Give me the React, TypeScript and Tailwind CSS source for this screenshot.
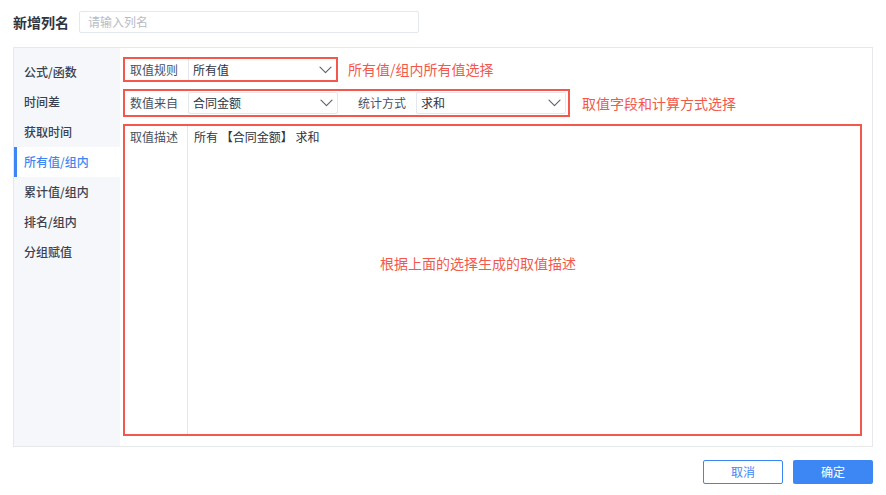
const menuItems = ['公式/函数', '时间差', '获取时间', '所有值/组内', '累计值/组内', '排名/组内', '分组赋值'];

function Chevron() {
  return (
    <svg width="13" height="8" viewBox="0 0 13 8" fill="none" className="mr-[4px]">
      <path d="M1 1.2l5.5 5.5 5.5-5.5" stroke="#5f6673" strokeWidth="1.2" strokeLinecap="round" strokeLinejoin="round" />
    </svg>
  );
}

function Select({ value }: { value: string }) {
  return (
    <div className="w-[150px] h-[22px] flex items-center justify-between border border-[#e4e7ed] rounded-[2px] bg-white pl-[4px]">
      <span className="text-[12px] text-[#2f3541]">{value}</span>
      <Chevron />
    </div>
  );
}

export default function App() {
  return (
    <div className="w-[886px] h-[495px] bg-white font-['Noto_Sans_CJK_SC','Noto_Sans',sans-serif] text-[#2f3541]">
      {/* Header */}
      <div className="flex items-center pl-[13px] pt-[11px]">
        <span className="text-[14px] font-bold text-[#2f3541] w-[66px]">新增列名</span>
        <div className="w-[340px] h-[22px] border border-[#e4e7ed] rounded-[2px] flex items-center pl-[8px]">
          <span className="text-[12px] text-[#b8bcc4]">请输入列名</span>
        </div>
      </div>

      {/* Panel */}
      <div className="ml-[13px] mt-[14px] w-[860px] h-[400px] border border-[#e6e8eb] flex">
        {/* Sidebar */}
        <div className="w-[106px] bg-[#f5f7fa] pt-[9px]">
          {menuItems.map((item) => {
            const active = item === '所有值/组内';
            return (
              <div
                key={item}
                className={
                  active
                    ? 'h-[30px] flex items-center pl-[7px] border-l-[3px] border-[#3d87f5] bg-white text-[12px] font-medium text-[#3d87f5]'
                    : 'h-[30px] flex items-center pl-[10px] text-[12px] font-medium text-[#3a4150]'
                }
              >
                {item}
              </div>
            );
          })}
        </div>

        {/* Content */}
        <div className="flex-1 pl-[3px] pt-[9px] pr-[10px]">
          {/* Rule row */}
          <div className="flex items-center">
            <div className="w-[215px] h-[25px] border-2 border-[#f4574b] flex items-center">
              <span className="w-[63px] pl-[5px] text-[12px] text-[#4a5060]">取值规则</span>
              <div className="flex-1 h-full flex items-center justify-between border-l border-[#e4e7ed] pl-[4px]">
                <span className="text-[12px] text-[#2f3541]">所有值</span>
                <Chevron />
              </div>
            </div>
            <span className="ml-[10px] text-[14px] text-[#f4574b]">所有值/组内所有值选择</span>
          </div>

          {/* Field row */}
          <div className="flex items-center mt-[7px]">
            <div className="w-[447px] h-[28px] border-2 border-[#f4574b] flex items-center">
              <span className="w-[63px] pl-[5px] text-[12px] text-[#4a5060]">数值来自</span>
              <Select value="合同金额" />
              <span className="ml-[20px] w-[58px] text-[12px] text-[#4a5060]">统计方式</span>
              <Select value="求和" />
            </div>
            <span className="ml-[12px] text-[14px] text-[#f4574b]">取值字段和计算方式选择</span>
          </div>

          {/* Description box */}
          <div className="mt-[7px] w-[739px] h-[312px] border-2 border-[#f4574b] flex">
            <div className="w-[63px] pl-[5px] pt-[2px] text-[12px] text-[#4a5060] border-r border-[#e4e7ed]">取值描述</div>
            <div className="flex-1 pl-[6px] pt-[2px]">
              <div className="text-[12px] text-[#2f3541]">所有 【合同金额】 求和</div>
              <div className="mt-[107px] ml-[186px] text-[14px] text-[#f4574b]">根据上面的选择生成的取值描述</div>
            </div>
          </div>
        </div>
      </div>

      {/* Footer */}
      <div className="flex justify-end gap-[10px] mt-[13px] pr-[13px]">
        <button className="w-[80px] h-[24px] border border-[#3d87f5] rounded-[2px] text-[12px] text-[#3d87f5] bg-white">取消</button>
        <button className="w-[80px] h-[24px] rounded-[2px] text-[12px] text-white bg-[#3d87f5]">确定</button>
      </div>
    </div>
  );
}
